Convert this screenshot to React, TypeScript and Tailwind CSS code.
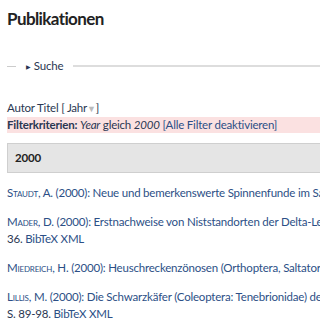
import React from "react";

const entries = [
  { a: "Staudt", i: "A.", t: "Neue und bemerkenswerte Spinnenfunde im Saarland", tail: null },
  { a: "Mader", i: "D.", t: "Erstnachweise von Niststandorten der Delta-Lehmwespe im Saarland", tail: "36." },
  { a: "Miedreich", i: "H.", t: "Heuschreckenzönosen (Orthoptera, Saltatoria) im Saarland", tail: null },
  { a: "Lillis", i: "M.", t: "Die Schwarzkäfer (Coleoptera: Tenebrionidae) des Saarlandes", tail: "S. 89-98." },
];

export default function App() {
  return (
    <div className="w-[320px] h-[320px] overflow-hidden bg-white text-[11.5px] tracking-[-0.2px] text-[#2a3752]" style={{ fontFamily: 'Lato, sans-serif' }}>
      <div className="pl-[7px] w-[600px]">
        <h1 className="pt-[7px] text-[17px] leading-[24px] font-bold tracking-[-0.6px] text-[#222]">Publikationen</h1>
        <div className="mt-[27px] flex items-center h-[16px]">
          <div className="w-[9px] h-px bg-[#ccc]"></div>
          <div className="px-[10px] flex items-center gap-[3px]">
            <span className="text-[6px]">▶</span>
            <span>Suche</span>
          </div>
          <div className="flex-1 h-[2px] bg-[#ddd]"></div>
        </div>
        <div className="mt-[26px] leading-[16px]">
          Autor Titel [ Jahr<span className="text-[#bbb] text-[9px]">▼</span>]
        </div>
        <div className="bg-[#fbe1e1] leading-[16px]">
          <span className="font-bold">Filterkriterien:</span> <i>Year</i> gleich <i>2000</i>{" "}
          <span className="text-[#2c4f86]">[Alle Filter deaktivieren]</span>
        </div>
        <div className="mt-[10px] h-[30px] bg-[#e5e5e5] border border-[#cfcfcf] flex items-center pl-[7px] font-bold text-[#222]">
          2000
        </div>
        <div className="mt-[11px] flex flex-col gap-[12px] text-[#2c4f86] leading-[17px]">
          {entries.map((e) => (
            <div key={e.a} className="w-[313px]">
              <div className="whitespace-nowrap">
                <span className="[font-variant-caps:small-caps]">{e.a}</span>, {e.i} (2000): {e.t}
              </div>
              {e.tail && (
                <div className="whitespace-nowrap">
                  <span className="text-[#2a3752]">{e.tail}</span> BibTeX XML
                </div>
              )}
            </div>
          ))}
        </div>
      </div>
    </div>
  );
}
